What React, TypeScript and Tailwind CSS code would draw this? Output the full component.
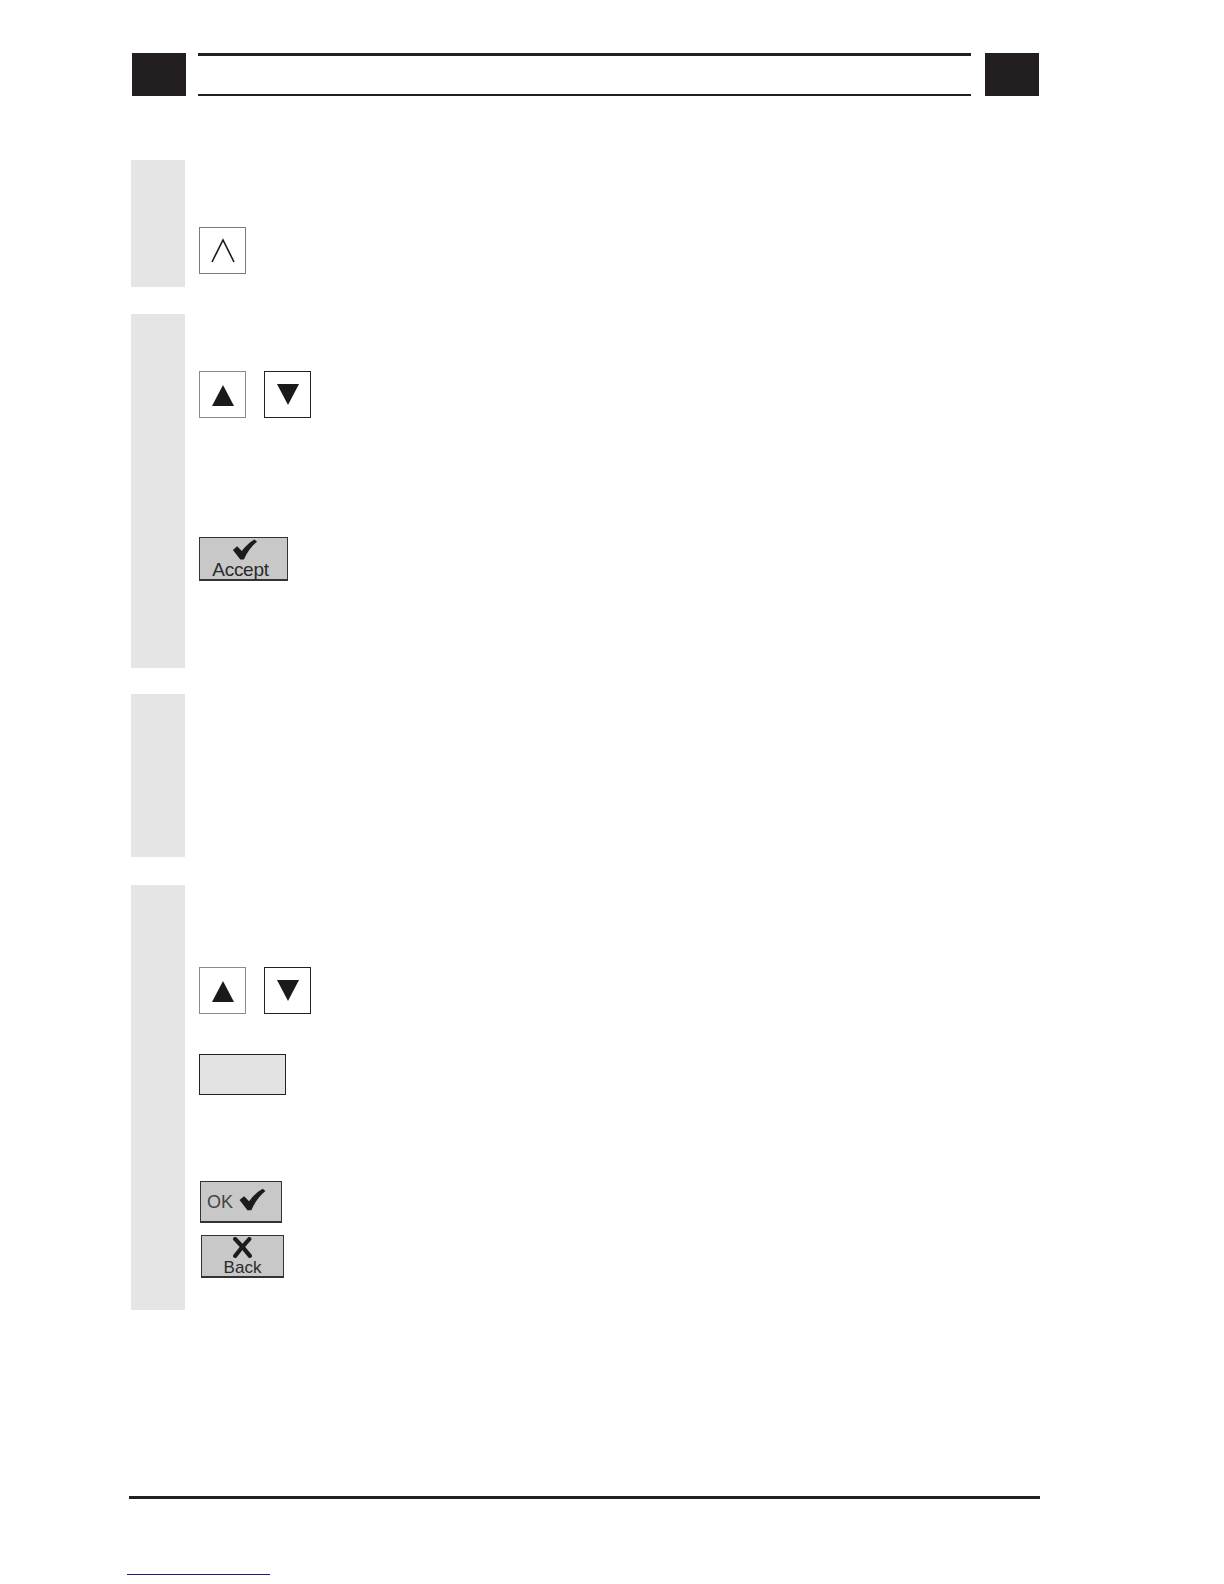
import React from 'react';

const font = { fontFamily: '"Liberation Sans", Arial, sans-serif' };

const Check: React.FC<{ className?: string }> = ({ className }) => (
  <svg viewBox="0 0 24 20" className={className}>
    <path d="M0.5 10.5 L4.5 7 L9 11.5 Q14 4.5 21 0.5 L23.5 2.5 Q15.5 9 11 19.5 L7.5 19.5 Z" fill="#1c1c1c" />
  </svg>
);

const Cross: React.FC<{ className?: string }> = ({ className }) => (
  <svg viewBox="0 0 20 20" className={className}>
    <path d="M3 2 Q10 9 17 18" stroke="#1c1c1c" strokeWidth="4" fill="none" strokeLinecap="round" />
    <path d="M16.5 2 Q9 10 3 18" stroke="#1c1c1c" strokeWidth="4" fill="none" strokeLinecap="round" />
  </svg>
);

const ArrowKeys: React.FC = () => (
  <div className="flex gap-[18px]">
    <div className="w-[47px] h-[47px] border border-[#8a8a8a] bg-white flex items-center justify-center">
      <svg width="24" height="24" viewBox="0 0 24 24">
        <polygon points="12,2 23,23 1,23" fill="#1a1a1a" />
      </svg>
    </div>
    <div className="w-[47px] h-[47px] border border-[#222] bg-white flex items-center justify-center">
      <svg width="24" height="24" viewBox="0 0 24 24">
        <polygon points="1,1 23,1 12,22" fill="#1a1a1a" />
      </svg>
    </div>
  </div>
);

const Section: React.FC<{ height: string; top: string; children?: React.ReactNode }> = ({ height, top, children }) => (
  <div className={`flex ${top}`}>
    <div className={`w-[54px] ${height} bg-[#e6e5e6]`} />
    <div className="pl-[14px] flex flex-col items-start">{children}</div>
  </div>
);

export default function App() {
  return (
    <div className="w-[1224px] h-[1584px] bg-white relative" style={font}>
      {/* Header */}
      <div className="flex pt-[53px] pl-[132px]">
        <div className="w-[54px] h-[43px] bg-[#231f20]" />
        <div className="ml-[12px] w-[773px] h-[43px] border-t-[3px] border-b-2 border-[#231f20]" />
        <div className="ml-[14px] w-[54px] h-[43px] bg-[#231f20]" />
      </div>

      <div className="pl-[131px]">
        <Section height="h-[127px]" top="mt-[64px]">
          <div className="mt-[67px] w-[47px] h-[47px] border border-[#7a7a7a] bg-white flex items-center justify-center">
            <svg width="26" height="26" viewBox="0 0 26 26">
              <polyline points="2,24 13,2 24,24" stroke="#1a1a1a" strokeWidth="1.6" fill="none" />
            </svg>
          </div>
        </Section>

        <Section height="h-[354px]" top="mt-[27px]">
          <div className="mt-[57px]">
            <ArrowKeys />
          </div>
          <div className="mt-[119px] w-[89px] h-[44px] bg-[#c8c8c8] border border-[#333] border-b-2 flex flex-col items-center leading-none">
            <Check className="w-[26px] h-[21px] mt-[1px] ml-[3px]" />
            <span className="text-[19px] text-[#2a2a2a] -ml-[6px] tracking-[-0.3px]">Accept</span>
          </div>
        </Section>

        <Section height="h-[163px]" top="mt-[26px]" />

        <Section height="h-[425px]" top="mt-[28px]">
          <div className="mt-[82px]">
            <ArrowKeys />
          </div>
          <div className="mt-[40px] w-[87px] h-[41px] bg-[#e4e3e4] border border-[#222]" />
          <div className="mt-[86px] ml-[1px] w-[82px] h-[42px] bg-[#c8c8c8] border border-[#333] border-b-2 flex items-center pl-[6px] gap-[6px]">
            <span className="text-[18px] text-[#444] leading-none">OK</span>
            <Check className="w-[27px] h-[23px] -mt-[4px]" />
          </div>
          <div className="mt-[12px] ml-[2px] w-[83px] h-[43px] bg-[#c8c8c8] border border-[#333] border-b-2 flex flex-col items-center leading-none">
            <Cross className="w-[21px] h-[21px] mt-[1px]" />
            <span className="text-[17px] text-[#2a2a2a] mt-[1px]">Back</span>
          </div>
        </Section>
      </div>

      {/* Footer rule */}
      <div className="absolute left-[129px] top-[1496px] w-[911px] h-[3px] bg-[#231f20]" />
      <div className="absolute left-[127px] top-[1574px] w-[143px] h-[1px] bg-[#1a1a80]" />
    </div>
  );
}
